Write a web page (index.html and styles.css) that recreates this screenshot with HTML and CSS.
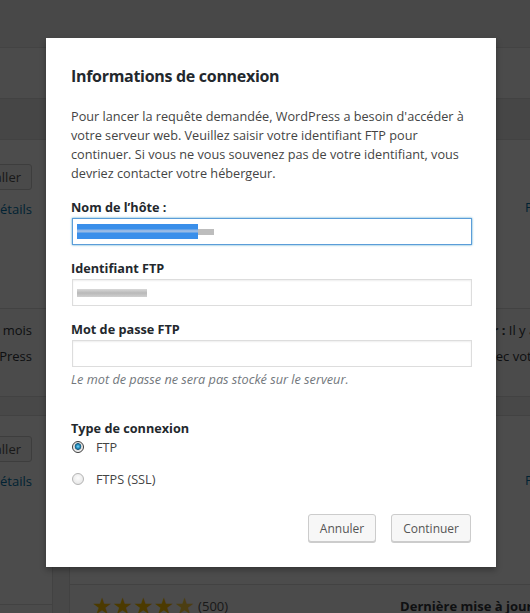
FILE: index.html
```html
<!DOCTYPE html>
<html lang="fr">
<head>
<meta charset="utf-8">
<title>Informations de connexion</title>
<link rel="stylesheet" href="styles.css">
</head>
<body>
<div class="page">
  <div class="strip strip-a"></div>
  <div class="strip strip-b"></div>
  <div class="strip strip-c"></div>
  <div class="cards">
    <div class="card">
      <div class="card-top card-top-1">
        <div class="actions">
          <span class="bg-button">Installer</span>
          <a class="bg-link">Plus de détails</a>
        </div>
      </div>
      <div class="card-bottom cb-left">
        <div class="cb-line"><b>Dernière mise à jour :</b> Il y a 3 mois</div>
        <div class="cb-line">Compatible avec votre version de WordPress</div>
      </div>
    </div>
    <div class="card">
      <div class="card-top card-top-1 right-top">
        <a class="bg-link name-link">Plus de détails</a>
      </div>
      <div class="card-bottom cb-right">
        <div class="cb-line upd"><b>Dernière mise à jour :</b> Il y a 2 mois</div>
        <div class="cb-line cmp">Compatible avec votre version de WordPress</div>
      </div>
    </div>
    <div class="card">
      <div class="card-top card-top-2">
        <div class="actions">
          <span class="bg-button">Installer</span>
          <a class="bg-link">Plus de détails</a>
        </div>
      </div>
      <div class="card-bottom cb-left"></div>
    </div>
    <div class="card">
      <div class="card-top card-top-2b right-top">
        <a class="bg-link name-link">Plus de détails</a>
      </div>
      <div class="card-bottom cb-right2">
        <div class="rating">
          <span class="stars">★★★★<span class="half">★</span></span>
          <span class="count">(500)</span>
        </div>
        <div class="upd2"><b>Dernière mise à jour :</b></div>
      </div>
    </div>
  </div>
</div>
<div class="overlay"></div>

<div class="modal">
  <h2 class="modal-title">Informations de connexion</h2>
  <p class="intro">Pour lancer la requête demandée, WordPress a besoin d'accéder à votre serveur web. Veuillez saisir votre identifiant FTP pour continuer. Si vous ne vous souvenez pas de votre identifiant, vous devriez contacter votre hébergeur.</p>

  <div class="field">
    <label class="field-label">Nom de l’hôte :</label>
    <div class="input focus">
      <span class="sel"></span><span class="blur blur-1"></span>
    </div>
  </div>
  <div class="field">
    <label class="field-label">Identifiant FTP</label>
    <div class="input">
      <span class="blur blur-2"></span>
    </div>
  </div>
  <div class="field">
    <label class="field-label">Mot de passe FTP</label>
    <div class="input"></div>
    <p class="note">Le mot de passe ne sera pas stocké sur le serveur.</p>
  </div>

  <div class="conn">
    <div class="field-label">Type de connexion</div>
    <div class="radio-row"><span class="radio checked"></span><span>FTP</span></div>
    <div class="radio-row"><span class="radio"></span><span>FTPS (SSL)</span></div>
  </div>

  <div class="buttons">
    <button class="button">Annuler</button>
    <button class="button">Continuer</button>
  </div>
</div>
</body>
</html>
```

FILE: styles.css
```css
html, body {
  margin: 0;
  padding: 0;
}
body {
  width: 530px;
  height: 613px;
  overflow: hidden;
  position: relative;
  background: #f1f1f1;
  font-family: "Open Sans", "Noto Sans", sans-serif;
  font-size: 12.7px;
  color: #444;
}

/* ---------- background page ---------- */
.page {
  width: 530px;
}
.strip-a {
  height: 47px;
  background: #f1f1f1;
}
.strip-b {
  height: 50px;
  background: #fbfbfb;
  border-top: 1px solid #e2e2e2;
}
.strip-c {
  height: 40px;
  background: #ececec;
  border-top: 1px solid #dcdcdc;
  border-bottom: 1px solid #dcdcdc;
}
.cards {
  display: grid;
  grid-template-columns: 453px 477px;
  column-gap: 16px;
  row-gap: 18px;
  margin-left: -400px;
  width: 946px;
}
.card {
  background: #fff;
  border: 1px solid #dedede;
  border-top: none;
}
.card-top {
  box-sizing: border-box;
  padding: 24px 20px 0;
}
.card-top-1 { height: 168px; }
.card-top-2 { height: 189px; padding-top: 20px; border-top: 1px solid #dedede; }
.card-top-2b { height: 169px; padding-top: 20px; border-top: 1px solid #dedede; }
.actions {
  display: flex;
  flex-direction: column;
  align-items: flex-end;
  gap: 10px;
}
.bg-button {
  height: 26px;
  line-height: 24px;
  box-sizing: border-box;
  padding: 0 10px;
  border: 1px solid #ccc;
  border-radius: 3px;
  background: #f7f7f7;
  color: #555;
  font-size: 13px;
  white-space: nowrap;
}
.bg-link {
  color: #0073aa;
  font-size: 13px;
  white-space: nowrap;
}
.right-top .name-link {
  display: block;
  margin-left: 435px;
  margin-top: 34px;
}
.card-top-2b .name-link { margin-top: 35px; }
.card-bottom {
  background: #fafafa;
  border-top: 1px solid #dedede;
  box-sizing: border-box;
  height: 88px;
  padding: 8px 20px 0;
  font-size: 13px;
  color: #32373c;
}
.cb-left { text-align: right; }
.cb-line {
  line-height: 26px;
  white-space: nowrap;
}
.cb-right .upd { margin-left: 276px; }
.cb-right .cmp { margin-left: 319px; }
.cb-right2 {
  display: flex;
  align-items: flex-start;
  padding: 10px 20px 0 22px;
  white-space: nowrap;
  line-height: 22px;
}
.rating {
  display: flex;
  align-items: center;
  flex-shrink: 0;
}
.stars {
  color: #ffc400;
  font-size: 23px;
  letter-spacing: 0;
  line-height: 22px;
  font-family: "DejaVu Sans", sans-serif;
}
.half { opacity: 0.75; }
.count {
  color: #555;
  margin-left: 3px;
  font-size: 13px;
}
.upd2 {
  flex-shrink: 0;
  margin-left: 172px;
  font-size: 13px;
  color: #32373c;
}

.overlay {
  position: absolute;
  inset: 0;
  background: rgba(0, 0, 0, 0.7);
}

/* ---------- modal ---------- */
.modal {
  position: absolute;
  left: 46px;
  top: 38px;
  width: 450px;
  height: 529px;
  box-sizing: border-box;
  padding: 27px 25px 25px;
  background: #fff;
  box-shadow: 0 3px 6px rgba(0, 0, 0, 0.3);
  display: flex;
  flex-direction: column;
}
.modal-title {
  margin: 0 0 20px;
  font-size: 16px;
  letter-spacing: -0.3px;
  line-height: 22px;
  font-weight: 700;
  color: #23282d;
}
.intro {
  margin: 0 0 15px;
  line-height: 19px;
  color: #444;
}
.field {
  display: flex;
  flex-direction: column;
  margin-bottom: 14px;
}
.field-label {
  font-weight: 700;
  line-height: 18px;
  color: #23282d;
  margin-bottom: 2px;
}
.input {
  height: 27px;
  box-sizing: border-box;
  border: 1px solid #ddd;
  box-shadow: inset 0 1px 2px rgba(0, 0, 0, 0.07);
  background: #fff;
  display: flex;
  align-items: center;
  padding-left: 4px;
  margin-left: 1px;
  margin-right: -1px;
}
.input.focus {
  border-color: #5b9dd9;
  box-shadow: 0 0 2px rgba(30, 140, 190, 0.8);
}
.sel {
  width: 121px;
  height: 15px;
  background: linear-gradient(#3a8fea 0, #3a8fea 5px, #8fb6e6 6px, #9bbde6 8px, #3a8fea 9px);
}
.blur-1 {
  width: 16px;
  height: 6px;
  background: #bdbdbd;
}
.blur-2 {
  width: 70px;
  height: 8px;
  background: linear-gradient(#d8d8d8, #b9b9b9 50%, #d0d0d0);
}
.note {
  margin: 3px 0 0;
  font-style: italic;
  line-height: 18px;
  color: #72777c;
}
.conn {
  margin-top: 17px;
}
.conn .field-label {
  margin-bottom: 0;
}
.radio-row {
  display: flex;
  align-items: center;
  gap: 12px;
  height: 20px;
  margin-bottom: 12px;
  padding-left: 1px;
  color: #444;
}
.radio {
  width: 12px;
  height: 12px;
  box-sizing: border-box;
  border-radius: 50%;
  border: 1px solid #b4b4b4;
  background: radial-gradient(circle at 50% 40%, #fcfcfc 0, #e9e9e9 70%, #dadada 100%);
}
.radio.checked {
  border-color: #3a3a3a;
  background: radial-gradient(circle at 50% 45%, #7fd6f7 0, #2c98c8 1.6px, #14597e 3px, #d8d8d8 3.6px, #f4f4f4 5px);
}
.buttons {
  margin-top: auto;
  display: flex;
  justify-content: flex-end;
  gap: 15px;
}
.button {
  height: 28px;
  box-sizing: border-box;
  padding: 0 11px;
  border: 1px solid #ccc;
  border-radius: 3px;
  background: #f7f7f7;
  box-shadow: 0 1px 0 #ccc;
  color: #555;
  font-family: "Open Sans", "Noto Sans", sans-serif;
  font-size: 12px;
}
```
